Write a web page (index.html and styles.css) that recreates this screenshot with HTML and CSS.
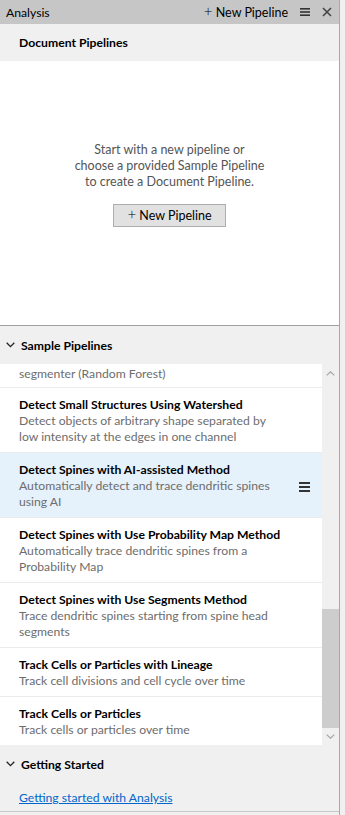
FILE: index.html
```html
<!DOCTYPE html>
<html>
<head>
<meta charset="utf-8">
<link rel="stylesheet" href="styles.css">
</head>
<body>
<div class="frame">
  <div class="panel">
    <div class="titlebar">
      <span class="title">Analysis</span>
      <span class="spacer"></span>
      <span class="tb-new"><span class="plus">+</span> New Pipeline</span>
      <svg class="tb-menu" width="10" height="8" viewBox="0 0 10 8"><rect x="0" y="0" width="10" height="1.6" fill="#333"/><rect x="0" y="3.2" width="10" height="1.6" fill="#333"/><rect x="0" y="6.4" width="10" height="1.6" fill="#333"/></svg>
      <svg class="tb-close" width="10" height="10" viewBox="0 0 10 10"><path d="M1 1 L9 9 M9 1 L1 9" stroke="#444" stroke-width="1.6"/></svg>
    </div>
    <div class="doc-header">Document Pipelines</div>
    <div class="doc-body">
      <p class="empty">Start with a new pipeline or<br>choose a provided Sample Pipeline<br>to create a Document Pipeline.</p>
      <button class="btn"><span class="plus">+</span> New Pipeline</button>
    </div>
    <div class="section-header">
      <svg class="chev" width="9" height="6" viewBox="0 0 9 6"><path d="M0.7 0.8 L4.5 4.6 L8.3 0.8" fill="none" stroke="#222" stroke-width="1.3"/></svg>
      <span>Sample Pipelines</span>
    </div>
    <div class="list-wrap">
      <div class="list">
        <div class="item item-partial">
          <div class="item-desc">segmenter (Random Forest)</div>
        </div>
        <div class="item">
          <div class="item-title">Detect Small Structures Using Watershed</div>
          <div class="item-desc">Detect objects of arbitrary shape separated by<br>low intensity at the edges in one channel</div>
        </div>
        <div class="item item-active">
          <div class="item-title">Detect Spines with AI-assisted Method</div>
          <div class="item-desc">Automatically detect and trace dendritic spines<br>using AI</div>
          <svg class="item-menu" width="11" height="10" viewBox="0 0 11 10"><rect x="0" y="0" width="11" height="2" fill="#333"/><rect x="0" y="4" width="11" height="2" fill="#333"/><rect x="0" y="8" width="11" height="2" fill="#333"/></svg>
        </div>
        <div class="item">
          <div class="item-title">Detect Spines with Use Probability Map Method</div>
          <div class="item-desc">Automatically trace dendritic spines from a<br>Probability Map</div>
        </div>
        <div class="item">
          <div class="item-title">Detect Spines with Use Segments Method</div>
          <div class="item-desc">Trace dendritic spines starting from spine head<br>segments</div>
        </div>
        <div class="item">
          <div class="item-title">Track Cells or Particles with Lineage</div>
          <div class="item-desc">Track cell divisions and cell cycle over time</div>
        </div>
        <div class="item item-last">
          <div class="item-title">Track Cells or Particles</div>
          <div class="item-desc">Track cells or particles over time</div>
        </div>
      </div>
      <div class="scrollbar">
        <svg class="arrow-up" width="9" height="5" viewBox="0 0 9 5"><path d="M0.7 4.4 L4.5 0.8 L8.3 4.4" fill="none" stroke="#a6a6a6" stroke-width="1.2"/></svg>
        <div class="thumb"></div>
        <svg class="arrow-down" width="9" height="5" viewBox="0 0 9 5"><path d="M0.7 0.6 L4.5 4.2 L8.3 0.6" fill="none" stroke="#a6a6a6" stroke-width="1.2"/></svg>
      </div>
    </div>
    <div class="section-header gs-header">
      <svg class="chev" width="9" height="6" viewBox="0 0 9 6"><path d="M0.7 0.8 L4.5 4.6 L8.3 0.8" fill="none" stroke="#222" stroke-width="1.3"/></svg>
      <span>Getting Started</span>
    </div>
    <div class="gs-body">
      <a class="link" href="#">Getting started with Analysis</a>
    </div>
    <div class="bottom-line"></div>
  </div>
  <div class="edge"></div>
</div>
</body>
</html>
```

FILE: styles.css
```css
* { box-sizing: border-box; }
html, body {
  margin: 0;
  padding: 0;
  background: #f0f0f0;
}
body {
  font-family: Lato, "Noto Sans", "Liberation Sans", sans-serif;
  font-size: 12.2px;
  color: #000;
}
.frame {
  display: flex;
  height: 815px;
  overflow: hidden;
}
.panel {
  width: 340px;
  border-right: 1px solid #a8a8a8;
  display: flex;
  flex-direction: column;
}
.edge {
  flex: 1;
  background: #f0f0f0;
}
.titlebar {
  height: 24px;
  background: #c6c6c6;
  display: flex;
  align-items: center;
  padding: 0 0 0 6px;
}
.spacer { flex: 1; }
.tb-new {
  font-size: 12.5px;
  margin-right: 12px;
}
.plus {
  font-size: 15px;
  line-height: 12px;
  font-weight: 300;
}
.tb-menu { margin-right: 12px; }
.tb-close { margin-right: 7px; }
.doc-header {
  height: 37px;
  padding-left: 19px;
  display: flex;
  align-items: center;
  font-weight: 700;
}
.doc-body {
  height: 265px;
  background: #fff;
  border-bottom: 1px solid #a0a0a0;
  display: flex;
  flex-direction: column;
  align-items: center;
  justify-content: center;
  padding-bottom: 18px;
}
.empty {
  margin: 0;
  text-align: center;
  color: #555;
  line-height: 16px;
  font-size: 12.5px;
}
.btn {
  margin-top: 14px;
  width: 113px;
  height: 23px;
  background: #e1e1e1;
  border: 1px solid #adadad;
  font-family: inherit;
  font-size: 12.5px;
  color: #000;
  padding: 0;
}
.section-header {
  height: 38px;
  display: flex;
  align-items: center;
  padding-left: 6px;
  font-weight: 700;
}
.chev { margin-right: 6px; }
.list-wrap {
  height: 381px;
  display: flex;
}
.list {
  flex: 1;
  background: #fff;
  overflow: hidden;
}
.item {
  position: relative;
  padding: 9px 0 7px 19px;
  border-bottom: 1px solid #ebebeb;
  line-height: 16px;
}
.item-partial {
  padding-top: 2px;
  padding-bottom: 5px;
}
.item-last { border-bottom: none; }
.item-active { background: #e5f1fb; }
.item-title {
  font-weight: 700;
  color: #000;
}
.item-desc {
  color: #6d6d6d;
}
.item-menu {
  position: absolute;
  right: 12px;
  top: 29px;
}
.scrollbar {
  width: 17px;
  background: #f0f0f0;
  position: relative;
}
.arrow-up {
  position: absolute;
  left: 4px;
  top: 7px;
}
.arrow-down {
  position: absolute;
  left: 4px;
  bottom: 6px;
}
.thumb {
  position: absolute;
  left: 0;
  right: 0;
  top: 245px;
  height: 119px;
  background: #cdcdcd;
}
.gs-body {
  height: 28px;
  padding-left: 19px;
  display: flex;
  align-items: center;
}
.link {
  color: #0066cc;
  text-decoration: underline;
}
.bottom-line {
  margin-top: auto;
  height: 4px;
  border-top: 1px solid #c8c8c8;
  background: #f0f0f0;
}
```
